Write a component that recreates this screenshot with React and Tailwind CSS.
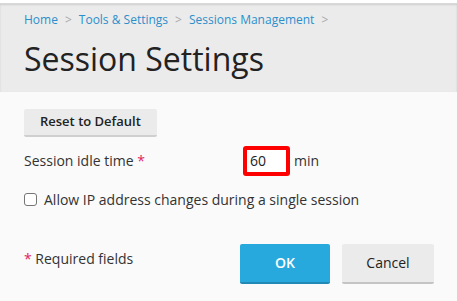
import React from 'react';

const Crumb = ({ children }) => (
  <>
    <a className="text-[#2b8fcb] hover:underline">{children}</a>
    <span className="mx-[7px] text-[#a8a8a8] text-[12px]">&gt;</span>
  </>
);

export default function App() {
  return (
    <div className="w-[457px] h-[301px] bg-[#fafafa] text-[#222] overflow-hidden font-['Open_Sans',sans-serif]">
      <div className="h-[3px] bg-white" />
      {/* Page header */}
      <div className="h-[89px] bg-[#ebebeb] border-t border-[#d9d9d9] shadow-[inset_0_1px_2px_rgba(0,0,0,0.12)] px-[24px]">
        <div className="pt-[6px] text-[12px] leading-[20px] flex items-center">
          <Crumb>Home</Crumb>
          <Crumb>Tools &amp; Settings</Crumb>
          <Crumb>Sessions Management</Crumb>
        </div>
        <h1 className="mt-[9px] text-[32px] leading-[40px] font-normal text-[#222]">Session Settings</h1>
      </div>

      {/* Form */}
      <div className="px-[24px] pt-[16px]">
        <button className="h-[28px] px-[16px] bg-[#ebebeb] border-b-2 border-[#cfcfcf] rounded-[2px] text-[13px] font-semibold text-[#222]">
          Reset to Default
        </button>

        <div className="flex items-center mt-[9px]">
          <label className="w-[219px] text-[14px] text-[#333]">
            Session idle time <span className="text-[#e0245e]">*</span>
          </label>
          <input
            defaultValue="60"
            className="w-[47px] h-[30px] border-[4px] border-[#ff0000] rounded-[3px] bg-white px-[3px] text-[14px] text-[#222] outline-none"
          />
          <span className="ml-[4px] text-[14px] text-[#333]">min</span>
        </div>

        <label className="flex items-center mt-[13px] text-[14px] text-[#333]">
          <span className="w-[13px] h-[13px] border border-[#767676] rounded-[3px] bg-white" />
          <span className="ml-[7px]">Allow IP address changes during a single session</span>
        </label>

        <div className="flex items-start justify-between mt-[34px] -mr-[1px]">
          <div className="text-[14px] text-[#333] pt-[4px]">
            <span className="text-[#e0245e]">*</span> Required fields
          </div>
          <div className="flex gap-[12px]">
            <button className="w-[90px] h-[40px] bg-[#28a9dd] border-b-2 border-[#2089b5] rounded-[2px] text-white text-[14px] font-semibold">
              OK
            </button>
            <button className="w-[92px] h-[40px] bg-[#ebebeb] border-b-2 border-[#c4c4c4] rounded-[2px] text-[#222] text-[14px]">
              Cancel
            </button>
          </div>
        </div>
      </div>
    </div>
  );
}
